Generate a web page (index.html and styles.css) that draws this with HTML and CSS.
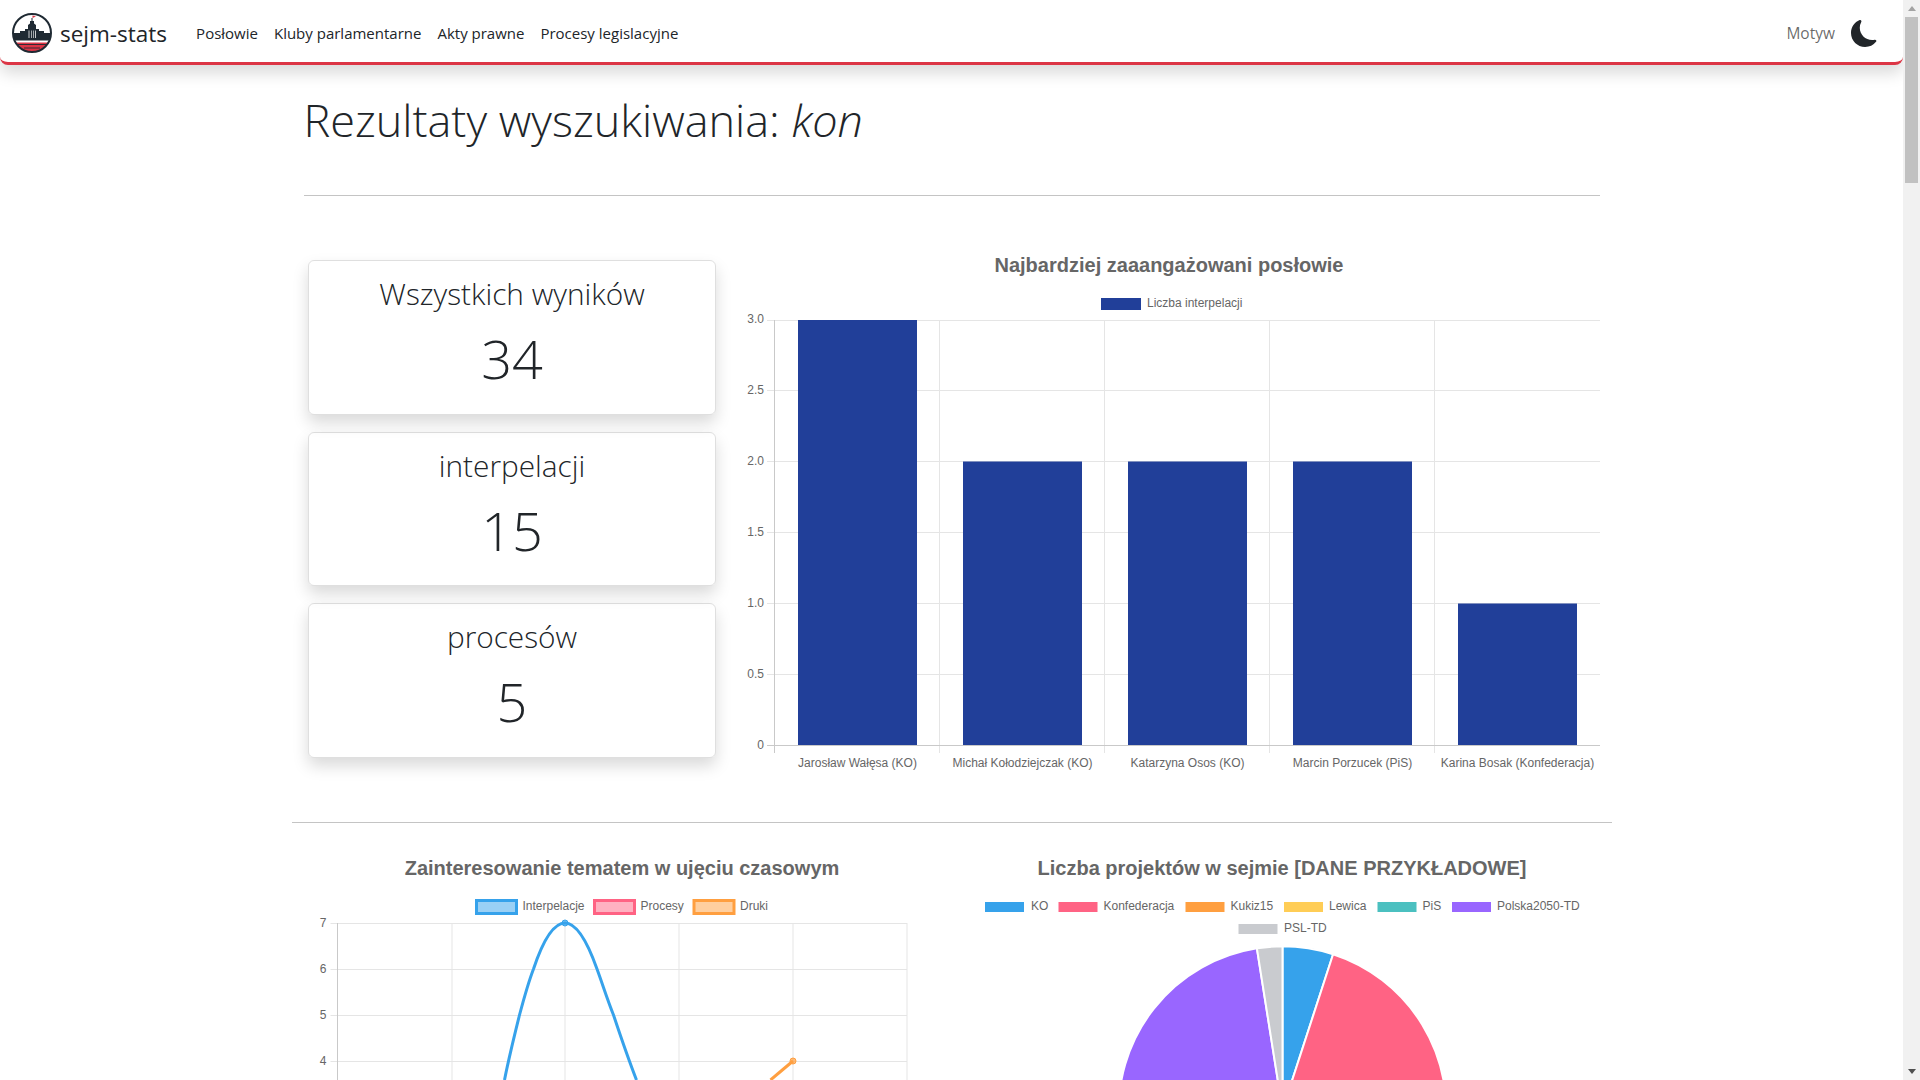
FILE: index.html
```html
<!DOCTYPE html>
<html lang="pl">
<head>
    <meta charset="UTF-8">
    <meta name="viewport" content="width=device-width, initial-scale=1.0">
    <title>sejm-stats</title>
    <link rel="stylesheet" href="styles.css">
</head>
<body>
    <div class="page">
        <div class="viewport">
            <nav class="navbar">
                <a class="brand" href="#">
                    <svg class="brand-logo" viewBox="0 0 40 40">
                        <clipPath id="logoClip"><circle cx="20" cy="20" r="19"/></clipPath>
                        <g clip-path="url(#logoClip)">
                            <rect width="40" height="40" fill="#fff"/>
                            <path d="M2 26V20h6v-2h5v-2h3v-4l2-1.500V8h1.500V5h1v3H22v2.500l2 1.500v4h3v2h5v2h6v6z" fill="#1f2a33"/>
                            <path d="M16.500 17.500h1V25h-1zM19 17.500h.8V25H19zM21 17.500h.8V25H21zM23 17.500h1V25h-1z" fill="#fff" opacity=".75"/>
                            <rect y="25.500" width="40" height="2" fill="#1f2a33"/>
                            <rect y="29.500" width="40" height="11" fill="#dc3545"/>
                            <path d="M6 31.500h28M12 35h16" stroke="#1f2a33" stroke-width=".9" fill="none"/>
                        </g>
                        <path d="M20.500 5V2.500l3.500 1-3.500 1.500z" fill="#dc3545"/>
                        <circle cx="20" cy="20" r="19" fill="none" stroke="#1f2a33" stroke-width="2"/>
                    </svg>
                    <span>sejm-stats</span>
                </a>
                <ul class="nav-links">
                    <li><a href="#">Posłowie</a></li>
                    <li><a href="#">Kluby parlamentarne</a></li>
                    <li><a href="#">Akty prawne</a></li>
                    <li><a href="#">Procesy legislacyjne</a></li>
                </ul>
                <div class="theme-switch">
                    <span class="theme-label">Motyw</span>
                    <svg class="theme-icon" viewBox="0 0 16 16">
                        <path d="M6 .278a.77.77 0 0 1 .08.858 7.2 7.2 0 0 0-.878 3.46c0 4.021 3.278 7.277 7.318 7.277q.792-.001 1.533-.16a.79.79 0 0 1 .81.316.73.73 0 0 1-.031.893A8.35 8.35 0 0 1 8.344 16C3.734 16 0 12.286 0 7.71 0 4.266 2.114 1.312 5.124.06A.75.75 0 0 1 6 .278"/>
                    </svg>
                </div>
            </nav>

            <main class="container">
                <h1 class="page-title">Rezultaty wyszukiwania: <em>kon</em></h1>
                <hr class="divider">

                <section class="summary-row">
                    <div class="stats">
                        <div class="stat-card">
                            <div class="stat-label">Wszystkich wyników</div>
                            <div class="stat-value">34</div>
                        </div>
                        <div class="stat-card">
                            <div class="stat-label">interpelacji</div>
                            <div class="stat-value">15</div>
                        </div>
                        <div class="stat-card">
                            <div class="stat-label">procesów</div>
                            <div class="stat-value">5</div>
                        </div>
                    </div>

                    <svg class="chart chart-bar" viewBox="742 250 858 530">
                        <text class="chart-title" x="1169" y="272">Najbardziej zaaangażowani posłowie</text>
                        <rect x="1101" y="298" width="40" height="12" fill="#213f99"/>
                        <text class="legend-text" x="1147" y="307">Liczba interpelacji</text>

                        <path class="grid" d="M767 320.500H1600M767 390.500H1600M767 461.500H1600M767 532.500H1600M767 603.500H1600M767 674.500H1600"/>
                        <path class="grid" d="M939.500 320V753M1104.500 320V753M1269.500 320V753M1434.500 320V753"/>
                        <path class="axis" d="M767 745.500H1600M774.500 320V753"/>

                        <rect x="798" y="320" width="119" height="425" fill="#213f99"/>
                        <rect x="963" y="461.500" width="119" height="283.500" fill="#213f99"/>
                        <rect x="1128" y="461.500" width="119" height="283.500" fill="#213f99"/>
                        <rect x="1293" y="461.500" width="119" height="283.500" fill="#213f99"/>
                        <rect x="1458" y="603.500" width="119" height="141.500" fill="#213f99"/>

                        <text class="tick-y" x="764" y="323">3.0</text>
                        <text class="tick-y" x="764" y="394">2.5</text>
                        <text class="tick-y" x="764" y="465">2.0</text>
                        <text class="tick-y" x="764" y="536">1.5</text>
                        <text class="tick-y" x="764" y="607">1.0</text>
                        <text class="tick-y" x="764" y="678">0.5</text>
                        <text class="tick-y" x="764" y="749">0</text>

                        <text class="tick-x" x="857.500" y="767">Jarosław Wałęsa (KO)</text>
                        <text class="tick-x" x="1022.500" y="767">Michał Kołodziejczak (KO)</text>
                        <text class="tick-x" x="1187.500" y="767">Katarzyna Osos (KO)</text>
                        <text class="tick-x" x="1352.500" y="767">Marcin Porzucek (PiS)</text>
                        <text class="tick-x" x="1517.500" y="767">Karina Bosak (Konfederacja)</text>
                    </svg>
                </section>

                <hr class="divider divider-wide">

                <section class="charts-row">
                    <svg class="chart chart-half" viewBox="291.500 840 660 300">
                        <text class="chart-title" x="621.500" y="875">Zainteresowanie tematem w ujęciu czasowym</text>

                        <rect x="476" y="900.500" width="40" height="13" fill="#36a2eb" fill-opacity=".5" stroke="#36a2eb" stroke-width="3"/>
                        <text class="legend-text" x="522" y="910">Interpelacje</text>
                        <rect x="594" y="900.500" width="40" height="13" fill="#ff6384" fill-opacity=".5" stroke="#ff6384" stroke-width="3"/>
                        <text class="legend-text" x="640" y="910">Procesy</text>
                        <rect x="693.500" y="900.500" width="40" height="13" fill="#ff9f40" fill-opacity=".5" stroke="#ff9f40" stroke-width="3"/>
                        <text class="legend-text" x="739.500" y="910">Druki</text>

                        <path class="grid" d="M330 923.500H906.500M330 969.500H906.500M330 1015.500H906.500M330 1061.500H906.500"/>
                        <path class="grid" d="M451.500 923V1140M564.500 923V1140M678.500 923V1140M792.500 923V1140M906.500 923V1140"/>
                        <path class="axis" d="M337 923V1140"/>

                        <path class="line line-blue" d="M504 1080C508 1060 514 1035 519 1015C523 1000 528 982 533 969C541 945 552 923 564.500 923C577 923 588 945 596.500 969C602 984 607 1000 613 1015C620 1036 629 1062 636 1080"/>
                        <circle class="point point-blue" cx="564.500" cy="923" r="3"/>
                        <path class="line line-orange" d="M770 1080L792.500 1061"/>
                        <circle class="point point-orange" cx="792.500" cy="1061" r="3"/>

                        <text class="tick-y" x="326" y="927">7</text>
                        <text class="tick-y" x="326" y="973">6</text>
                        <text class="tick-y" x="326" y="1019">5</text>
                        <text class="tick-y" x="326" y="1065">4</text>
                    </svg>

                    <svg class="chart chart-half" viewBox="951.500 840 660 300">
                        <text class="chart-title" x="1281.500" y="875">Liczba projektów w sejmie [DANE PRZYKŁADOWE]</text>

                        <rect x="984.500" y="902" width="39" height="10" fill="#36a2eb"/>
                        <text class="legend-text" x="1030.500" y="910">KO</text>
                        <rect x="1058" y="902" width="39" height="10" fill="#ff6384"/>
                        <text class="legend-text" x="1103" y="910">Konfederacja</text>
                        <rect x="1185" y="902" width="39" height="10" fill="#ff9f40"/>
                        <text class="legend-text" x="1230" y="910">Kukiz15</text>
                        <rect x="1283.500" y="902" width="39" height="10" fill="#ffcd56"/>
                        <text class="legend-text" x="1328.500" y="910">Lewica</text>
                        <rect x="1377" y="902" width="39" height="10" fill="#4bc0c0"/>
                        <text class="legend-text" x="1422" y="910">PiS</text>
                        <rect x="1451.500" y="902" width="39" height="10" fill="#9966ff"/>
                        <text class="legend-text" x="1496.500" y="910">Polska2050-TD</text>
                        <rect x="1238" y="924" width="39" height="10" fill="#c9cbcf"/>
                        <text class="legend-text" x="1283.500" y="932">PSL-TD</text>

                        <path class="slice" fill="#36a2eb" d="M1282 1110L1282 946.300A163.700 163.700 0 0 1 1332.600 954.300z"/>
                        <path class="slice" fill="#ff6384" d="M1282 1110L1332.600 954.300A163.700 163.700 0 0 1 1282 1273.700z"/>
                        <path class="slice" fill="#9966ff" d="M1282 1110L1282 1273.700A163.700 163.700 0 0 1 1256.400 948.300z"/>
                        <path class="slice" fill="#c9cbcf" d="M1282 1110L1256.400 948.300A163.700 163.700 0 0 1 1282 946.300z"/>
                    </svg>
                </section>
            </main>
        </div>

        <div class="scrollbar">
            <span class="scroll-arrow scroll-arrow-up"></span>
            <span class="scroll-thumb"></span>
            <span class="scroll-arrow scroll-arrow-down"></span>
        </div>
    </div>
</body>
</html>
```

FILE: styles.css
```css
* {
    margin: 0;
    padding: 0;
    box-sizing: border-box;
}

html, body {
    height: 100%;
    overflow: hidden;
}

body {
    font-family: "Open Sans", "Liberation Sans", sans-serif;
    color: #212529;
    background: #fff;
}

a {
    color: inherit;
    text-decoration: none;
}

.page {
    display: flex;
    height: 1080px;
}

.viewport {
    flex: 1;
    min-width: 0;
    overflow: hidden;
}

/* navbar */
.navbar {
    display: flex;
    align-items: center;
    height: 65px;
    padding: 4px 25px 0 12px;
    border-bottom: 3px solid #dc3545;
    border-radius: 0 0 8px 8px;
    box-shadow: 0 8px 16px rgba(0,0,0,0.15);
    background: #fff;
    position: relative;
}

.brand {
    display: flex;
    align-items: center;
    gap: 8px;
    font-size: 22.500px;
    margin-right: 29px;
}

.brand-logo {
    width: 40px;
    height: 40px;
}

.nav-links {
    display: flex;
    gap: 16px;
    list-style: none;
    font-size: 15px;
}

.theme-switch {
    display: flex;
    align-items: center;
    gap: 16px;
    margin-left: auto;
}

.theme-label {
    font-size: 15.500px;
    color: rgba(0,0,0,0.6);
}

.theme-icon {
    width: 27px;
    height: 27px;
    fill: #212529;
}

/* main */
.container {
    width: 1320px;
    margin: 0 auto;
    padding: 0 12px;
}

.page-title {
    font-size: 45px;
    font-weight: 300;
    line-height: 60px;
    padding-top: 25px;
    height: 130px;
}

.divider {
    border: none;
    border-top: 1px solid #c4c4c4;
}

.divider-wide {
    margin: 0 -12px;
}

.summary-row {
    display: flex;
    align-items: flex-start;
    justify-content: space-between;
    padding: 54px 0 42px 4.500px;
}

.stats {
    display: flex;
    flex-direction: column;
    gap: 17px;
    width: 408px;
    margin-top: 10px;
}

.stat-card {
    height: 154.700px;
    padding-top: 11px;
    text-align: center;
    border: 1px solid rgba(0,0,0,0.125);
    border-radius: 6px;
    box-shadow: 0 8px 16px rgba(0,0,0,0.15);
    font-weight: 300;
}

.stat-label {
    font-size: 29.800px;
    line-height: 44px;
}

.stat-value {
    font-size: 54px;
    line-height: 76px;
    margin-top: 4px;
}

.charts-row {
    display: flex;
    margin: 17px -12px 0;
}

/* charts */
.chart {
    display: block;
    flex: none;
}

.chart-bar {
    width: 858px;
    height: 530px;
}

.chart-half {
    width: 660px;
    height: 300px;
}

.chart text {
    font-family: "Liberation Sans", Arial, sans-serif;
    fill: #666;
    font-size: 12px;
}

.chart .chart-title {
    font-size: 20px;
    font-weight: bold;
    text-anchor: middle;
}

.tick-y {
    text-anchor: end;
}

.tick-x {
    text-anchor: middle;
}

.grid {
    fill: none;
    stroke: #e5e5e5;
    stroke-width: 1;
}

.axis {
    fill: none;
    stroke: #c9c9c9;
    stroke-width: 1;
}

.line {
    fill: none;
    stroke-width: 3;
}

.line-blue {
    stroke: #36a2eb;
}

.line-orange {
    stroke: #ff9f40;
}

.point-blue {
    fill: #36a2eb;
    fill-opacity: 0.7;
    stroke: #36a2eb;
}

.point-orange {
    fill: #ff9f40;
    fill-opacity: 0.7;
    stroke: #ff9f40;
}

.slice {
    stroke: #fff;
    stroke-width: 2;
}

/* scrollbar drawn by hand, the window itself does not scroll */
.scrollbar {
    flex: none;
    display: flex;
    flex-direction: column;
    align-items: center;
    width: 17px;
    background: #f1f1f1;
}

.scroll-arrow {
    flex: none;
    width: 0;
    height: 0;
    margin: 6px 0;
    border-left: 4px solid transparent;
    border-right: 4px solid transparent;
}

.scroll-arrow-up {
    border-bottom: 5px solid #a3a3a3;
}

.scroll-arrow-down {
    margin-top: auto;
    border-top: 5px solid #505050;
}

.scroll-thumb {
    width: 13px;
    height: 166px;
    background: #c1c1c1;
}
```
